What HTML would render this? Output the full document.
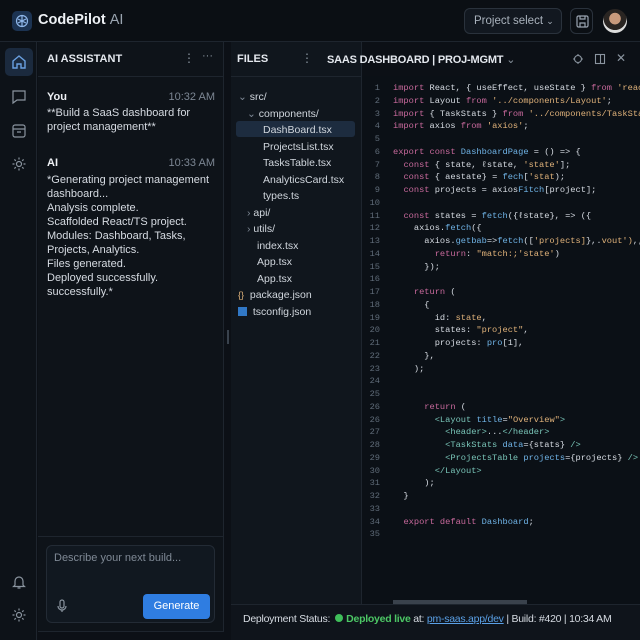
<!DOCTYPE html>
<html><head><meta charset="utf-8"><style>
*{box-sizing:border-box;margin:0;padding:0}
body{width:640px;height:640px;background:#0c1016;color:#d6dbe2;font-family:"Liberation Sans",sans-serif;position:relative;overflow:hidden}
.abs{position:absolute}
.top{left:0;top:0;width:640px;height:42px;background:#0b0f14;border-bottom:1px solid #1e252e}
.rail{left:0;top:42px;width:37px;height:598px;background:#0d1218;border-right:1px solid #1e252e}
.ai{left:38px;top:42px;width:186px;height:590px;background:#0e1319;border-right:1px solid #1e252e;border-bottom:1px solid #1e252e}
.files{left:231px;top:42px;width:131px;height:562px;background:#10161d;border-right:1px solid #1e252e}
.code{left:362px;top:76px;width:278px;height:528px;background:#0b1016}
.hdr{font-weight:bold;font-size:11px;color:#e4e8ee}
.mono{font-family:"Liberation Mono",monospace;font-size:8.7px;white-space:pre}
.ln{color:#5f6b78;text-align:right;width:20px}
.k{color:#c8699c}.s{color:#e0b27a}.f{color:#6fb3e6}.t{color:#79c5b8}.v{color:#d6dbe2}
.fi{font-size:10.5px;color:#d0d6dd}
svg{display:block}
</style></head><body>
<div class="abs top"></div>
<div class="abs" style="left:12px;top:11px;width:20px;height:20px;border-radius:5px;background:#1c3352"><svg width="20" height="20" viewBox="0 0 20 20" fill="none" stroke="#8fb7ea" stroke-width="1.2"><circle cx="10" cy="10" r="5.5"/><path d="M6 8l8 4M6 12l8-4M10 4.5v11"/></svg></div>
<div class="abs" style="left:38px;top:12px;font-size:14.5px;font-weight:bold;color:#eef1f5">CodePilot <span style="font-weight:normal;color:#9aa4b0">AI</span></div>
<div class="abs" style="left:464px;top:8px;width:98px;height:26px;border:1px solid #2a323c;border-radius:6px;background:#121820;font-size:11.5px;color:#a9b2bc;padding:6px 0 0 9px">Project select <span style="font-size:9px">⌄</span></div>
<div class="abs" style="left:570px;top:8px;width:23px;height:26px;border:1px solid #2a323c;border-radius:6px"><svg width="23" height="26" viewBox="0 0 23 26" fill="none" stroke="#9aa4b0" stroke-width="1.2"><rect x="6" y="7" width="11" height="11" rx="1.5"/><path d="M9 7v3h5V7M9 18v-4h5v4"/></svg></div>
<div class="abs" style="left:603px;top:9px;width:24px;height:24px;border-radius:50%;background:radial-gradient(circle at 50% 40%,#c99a7c 0 30%,#2a2522 32% 60%,#ddd 62%)"></div>

<div class="abs rail"></div>
<div class="abs" style="left:5px;top:48px;width:28px;height:28px;border-radius:5px;background:#1b2a3e"><svg width="28" height="28" viewBox="0 0 28 28" fill="none" stroke="#6aa0e0" stroke-width="1.4"><path d="M8 13l6-5 6 5v7h-4v-4h-4v4H8z"/></svg></div>
<svg class="abs" style="left:10px;top:88px" width="18" height="18" viewBox="0 0 18 18" fill="none" stroke="#8a949f" stroke-width="1.2"><path d="M3 3h12v9H7l-4 3z"/></svg>
<svg class="abs" style="left:10px;top:122px" width="18" height="18" viewBox="0 0 18 18" fill="none" stroke="#8a949f" stroke-width="1.2"><rect x="3" y="3" width="12" height="12" rx="2"/><path d="M3 7h12M7 10h4"/></svg>
<svg class="abs" style="left:10px;top:155px" width="18" height="18" viewBox="0 0 18 18" fill="none" stroke="#8a949f" stroke-width="1.2"><circle cx="9" cy="9" r="2.5"/><path d="M9 2.5v2M9 13.5v2M2.5 9h2M13.5 9h2M4.4 4.4l1.4 1.4M12.2 12.2l1.4 1.4M4.4 13.6l1.4-1.4M12.2 5.8l1.4-1.4"/></svg>
<svg class="abs" style="left:10px;top:573px" width="18" height="18" viewBox="0 0 18 18" fill="none" stroke="#8a949f" stroke-width="1.2"><path d="M5 12V8a4 4 0 018 0v4l1.5 1.5h-11zM7.5 15h3"/></svg>
<svg class="abs" style="left:10px;top:606px" width="18" height="18" viewBox="0 0 18 18" fill="none" stroke="#8a949f" stroke-width="1.2"><circle cx="9" cy="9" r="2.5"/><path d="M9 2.5v2M9 13.5v2M2.5 9h2M13.5 9h2M4.4 4.4l1.4 1.4M12.2 12.2l1.4 1.4M4.4 13.6l1.4-1.4M12.2 5.8l1.4-1.4"/></svg>

<div class="abs ai"></div>
<div class="abs" style="left:38px;top:76px;width:186px;height:1px;background:#1e252e"></div>
<div class="abs hdr" style="left:47px;top:53px">AI ASSISTANT</div>
<div class="abs" style="left:183px;top:51px;color:#8a949f;font-size:12px">⋮</div>
<div class="abs" style="left:202px;top:50px;color:#8a949f;font-size:11px">···</div>
<div class="abs" style="left:47px;top:90px;font-size:11px;line-height:14px;width:168px">
<div style="display:flex;justify-content:space-between"><b style="color:#eef1f5;font-weight:bold">You</b><span style="color:#7c8693">10:32 AM</span></div>
<div style="color:#d6dbe2;margin-top:2px">**Build a SaaS dashboard for project management**</div>
<div style="display:flex;justify-content:space-between;margin-top:22px"><b style="color:#eef1f5">AI</b><span style="color:#7c8693">10:33 AM</span></div>
<div style="color:#d6dbe2;margin-top:3px">*Generating project management dashboard...<br>Analysis complete.<br>Scaffolded React/TS project.<br>Modules: Dashboard, Tasks, Projects, Analytics.<br>Files generated.<br>Deployed successfully.<br>successfully.*</div>
</div>
<div class="abs" style="left:38px;top:536px;width:186px;height:1px;background:#1e252e"></div>
<div class="abs" style="left:46px;top:545px;width:169px;height:78px;border:1px solid #232b35;border-radius:6px;background:#111820"></div>
<div class="abs" style="left:54px;top:552px;font-size:11px;color:#7f8995">Describe your next build...</div>
<svg class="abs" style="left:56px;top:598px" width="12" height="16" viewBox="0 0 12 16" fill="none" stroke="#8a949f" stroke-width="1.2"><rect x="4" y="2" width="4" height="8" rx="2"/><path d="M2 8a4 4 0 008 0M6 12v2"/></svg>
<div class="abs" style="left:143px;top:594px;width:67px;height:25px;border-radius:4px;background:#2f7de1;color:#fff;font-size:11px;text-align:center;line-height:25px">Generate</div>

<div class="abs" style="left:227px;top:330px;width:2px;height:14px;background:#39424d"></div>
<div class="abs files"></div>
<div class="abs" style="left:231px;top:76px;width:409px;height:1px;background:#1e252e"></div>
<div class="abs hdr" style="left:237px;top:53px">FILES</div>
<div class="abs" style="left:301px;top:51px;color:#8a949f;font-size:12px">⋮</div>
<div class="abs hdr" style="left:327px;top:53px;letter-spacing:-0.2px">SAAS DASHBOARD | PROJ-MGMT <span style="color:#8a949f;font-weight:normal">⌄</span></div>
<svg class="abs" style="left:572px;top:53px" width="12" height="12" viewBox="0 0 12 12" fill="none" stroke="#8a949f" stroke-width="1.1"><circle cx="6" cy="6" r="3.5"/><path d="M6 1v2M6 9v2M1 6h2M9 6h2"/></svg>
<svg class="abs" style="left:594px;top:53px" width="12" height="12" viewBox="0 0 12 12" fill="none" stroke="#8a949f" stroke-width="1.1"><rect x="1.5" y="1.5" width="9" height="9"/><path d="M6.5 1.5v9"/></svg>
<div class="abs" style="left:616px;top:51px;color:#8a949f;font-size:12px">✕</div>

<div class="abs" style="left:236px;top:121px;width:119px;height:16px;background:#1d2c3f;border-radius:3px"></div>
<div class="abs fi" style="left:238px;top:89px;line-height:16.5px">
<div><span style="color:#7c8693">⌄</span> src/</div>
<div style="padding-left:9px"><span style="color:#7c8693">⌄</span> components/</div>
<div style="padding-left:25px">DashBoard.tsx</div>
<div style="padding-left:25px">ProjectsList.tsx</div>
<div style="padding-left:25px">TasksTable.tsx</div>
<div style="padding-left:25px">AnalyticsCard.tsx</div>
<div style="padding-left:25px">types.ts</div>
<div style="padding-left:9px"><span style="color:#7c8693">›</span> api/</div>
<div style="padding-left:9px"><span style="color:#7c8693">›</span> utils/</div>
<div style="padding-left:19px">index.tsx</div>
<div style="padding-left:19px">App.tsx</div>
<div style="padding-left:19px">App.tsx</div>
<div><span style="color:#e0b27a;font-size:9px">{}</span>&nbsp; package.json</div>
<div><span style="display:inline-block;width:9px;height:9px;background:#3178c6;vertical-align:-1px"></span>&nbsp; tsconfig.json</div>
</div>

<div class="abs code"></div>
<div class="abs mono ln" style="left:360px;top:82px;line-height:12.75px">1
2
3
4
5
6
7
8
9
10
11
12
13
14
15
16
17
18
19
20
21
22
23
24
25
26
26
27
28
29
30
31
32
33
34
35</div>
<div class="abs mono" style="left:393px;top:82px;line-height:12.75px;color:#d6dbe2"><span class="k">import</span> React, { useEffect, useState } <span class="k">from</span> <span class="s">'react'</span>
<span class="k">import</span> Layout <span class="k">from</span> <span class="s">'../components/Layout'</span>;
<span class="k">import</span> { TaskStats } <span class="k">from</span> <span class="s">'../components/TaskStats'</span>
<span class="k">import</span> axios <span class="k">from</span> <span class="s">'axios'</span>;

<span class="k">export const</span> <span class="f">DashboardPage</span> = () =&gt; {
  <span class="k">const</span> { state, ℓstate, <span class="s">'state'</span>];
  <span class="k">const</span> { aestate} = <span class="f">fech</span>[<span class="s">'stat</span>);
  <span class="k">const</span> projects = axios<span class="f">Fitch</span>[project];

  <span class="k">const</span> states = <span class="f">fetch</span>({ℓstate}, =&gt; ({
    axios.<span class="f">fetch</span>({
      axios.<span class="f">getbab</span>=&gt;<span class="f">fetch</span>([<span class="s">'projects]</span>},.<span class="s">vout')</span>,,
        <span class="k">return</span>: <span class="s">"match:;'state'</span>)
      });

    <span class="k">return</span> (
      {
        id: <span class="s">state</span>,
        states: <span class="s">"project"</span>,
        projects: <span class="f">pro</span>[1],
      },
    );


      <span class="k">return</span> (
        <span class="t">&lt;Layout</span> <span class="f">title</span>=<span class="s">"Overview"</span><span class="t">&gt;</span>
          <span class="t">&lt;header&gt;</span>...<span class="t">&lt;/header&gt;</span>
          <span class="t">&lt;TaskStats</span> <span class="f">data</span>={stats} <span class="t">/&gt;</span>
          <span class="t">&lt;ProjectsTable</span> <span class="f">projects</span>={projects} <span class="t">/&gt;</span>
        <span class="t">&lt;/Layout&gt;</span>
      );
  }

  <span class="k">export default</span> <span class="f">Dashboard</span>;
</div>
<div class="abs" style="left:393px;top:600px;width:134px;height:5px;background:#3a424c"></div>

<div class="abs" style="left:231px;top:604px;width:409px;height:36px;background:#0f141b;border-top:1px solid #1e252e"></div>
<div class="abs" style="left:243px;top:613px;font-size:10.5px;letter-spacing:-0.25px;color:#d6dbe2;white-space:nowrap">Deployment Status: &nbsp;<span style="display:inline-block;width:8px;height:8px;border-radius:50%;background:#3fbf5a"></span> <b style="color:#4cc765">Deployed live</b> at: <span style="color:#5aa0e6;text-decoration:underline">pm-saas.app/dev</span> | Build: #420 | 10:34 AM</div>
</body></html>
